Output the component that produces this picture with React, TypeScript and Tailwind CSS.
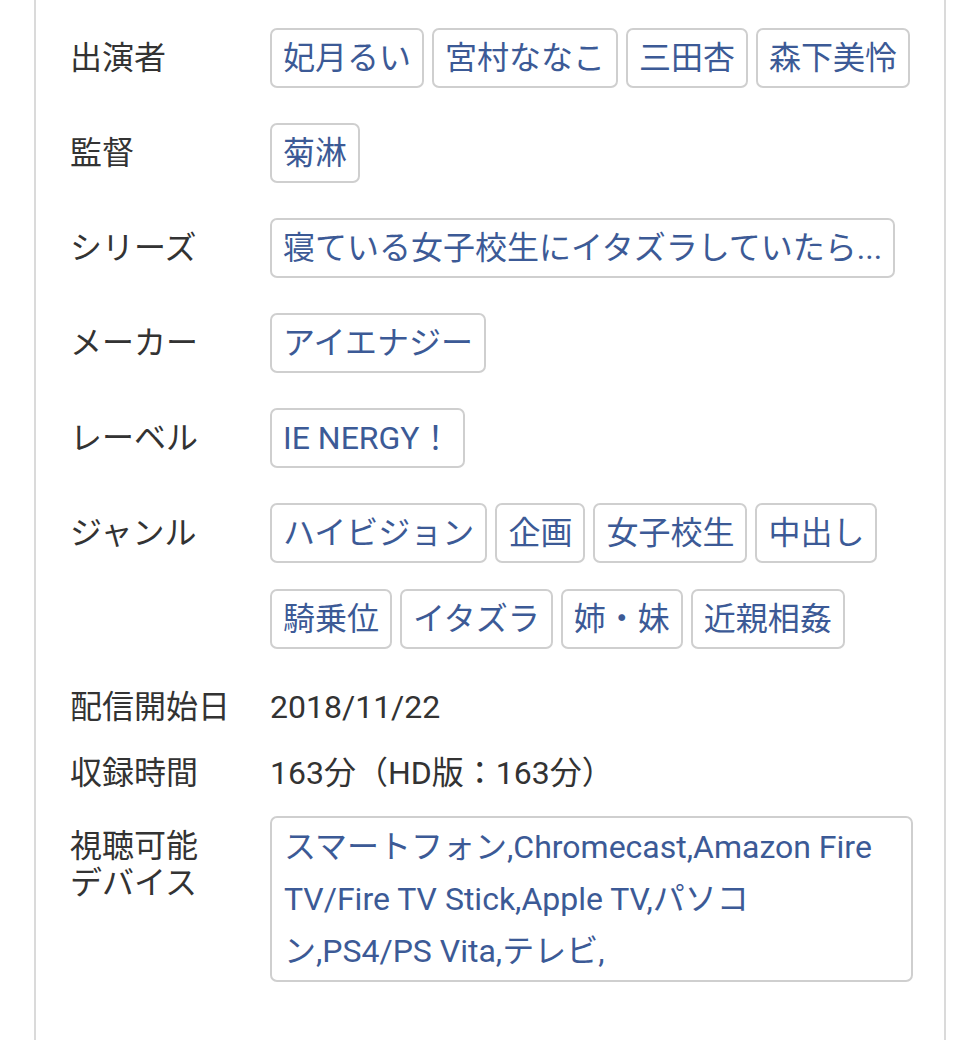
import React from 'react';

type Row =
  | { label: React.ReactNode; kind: 'tags'; tags: string[] }
  | { label: React.ReactNode; kind: 'text'; text: string }
  | { label: React.ReactNode; kind: 'box'; text: string };

const rows: Row[] = [
  { label: '出演者', kind: 'tags', tags: ['妃月るい', '宮村ななこ', '三田杏', '森下美怜'] },
  { label: '監督', kind: 'tags', tags: ['菊淋'] },
  { label: 'シリーズ', kind: 'tags', tags: ['寝ている女子校生にイタズラしていたら...'] },
  { label: 'メーカー', kind: 'tags', tags: ['アイエナジー'] },
  { label: 'レーベル', kind: 'tags', tags: ['IE NERGY！'] },
  {
    label: 'ジャンル',
    kind: 'tags',
    tags: ['ハイビジョン', '企画', '女子校生', '中出し', '騎乗位', 'イタズラ', '姉・妹', '近親相姦']
  },
  { label: '配信開始日', kind: 'text', text: '2018/11/22' },
  { label: '収録時間', kind: 'text', text: '163分（HD版：163分）' },
  {
    label: (
      <>
        視聴可能
        <br />
        デバイス
      </>
    ),
    kind: 'box',
    text: 'スマートフォン,Chromecast,Amazon Fire TV/Fire TV Stick,Apple TV,パソコン,PS4/PS Vita,テレビ,'
  }
];

// 作品詳細の情報テーブル（ラベル + タグ/テキスト）
function InfoRow({ row }: { row: Row }) {
  if (row.kind === 'tags') {
    return (
      <div className="flex">
        <div className="w-[200px] shrink-0 pt-[8px] leading-[44px] text-[#333]">{row.label}</div>
        <div className="flex flex-1 flex-wrap gap-x-[8px] gap-y-[26px] pb-[15px]">
          {row.tags.map((tag) => (
            <span
              key={tag}
              className="whitespace-nowrap rounded-[7px] border-2 border-[#cfcfcf] px-[11px] py-[6px] leading-[44px] text-[#3c5a96]"
            >
              {tag}
            </span>
          ))}
        </div>
      </div>
    );
  }
  if (row.kind === 'text') {
    return (
      <div className="flex leading-[46px] text-[#333]">
        <div className="w-[200px] shrink-0">{row.label}</div>
        <div className="flex-1">{row.text}</div>
      </div>
    );
  }
  return (
    <div className="flex">
      <div className="w-[200px] shrink-0 pt-[12px] leading-[37px] text-[#333]">{row.label}</div>
      <div className="flex-1 rounded-[7px] border-2 border-[#cfcfcf] pl-[12px] pr-[18px] py-[3px] leading-[52px] text-[#3c5a96]">
        {row.text}
      </div>
    </div>
  );
}

export default function App() {
  return (
    <div
      className="min-h-[1040px] overflow-hidden bg-white px-[34px] text-[32px]"
      style={{ fontFamily: 'Roboto, "Noto Sans CJK JP", sans-serif' }}
    >
      <div className="flex flex-col gap-[20px] rounded-b-[10px] border-x-2 border-b-2 border-[#dadada] pl-[34px] pr-[31px] pt-[28px] pb-[80px]">
        {rows.map((row, i) => (
          <InfoRow key={i} row={row} />
        ))}
      </div>
    </div>
  );
}
